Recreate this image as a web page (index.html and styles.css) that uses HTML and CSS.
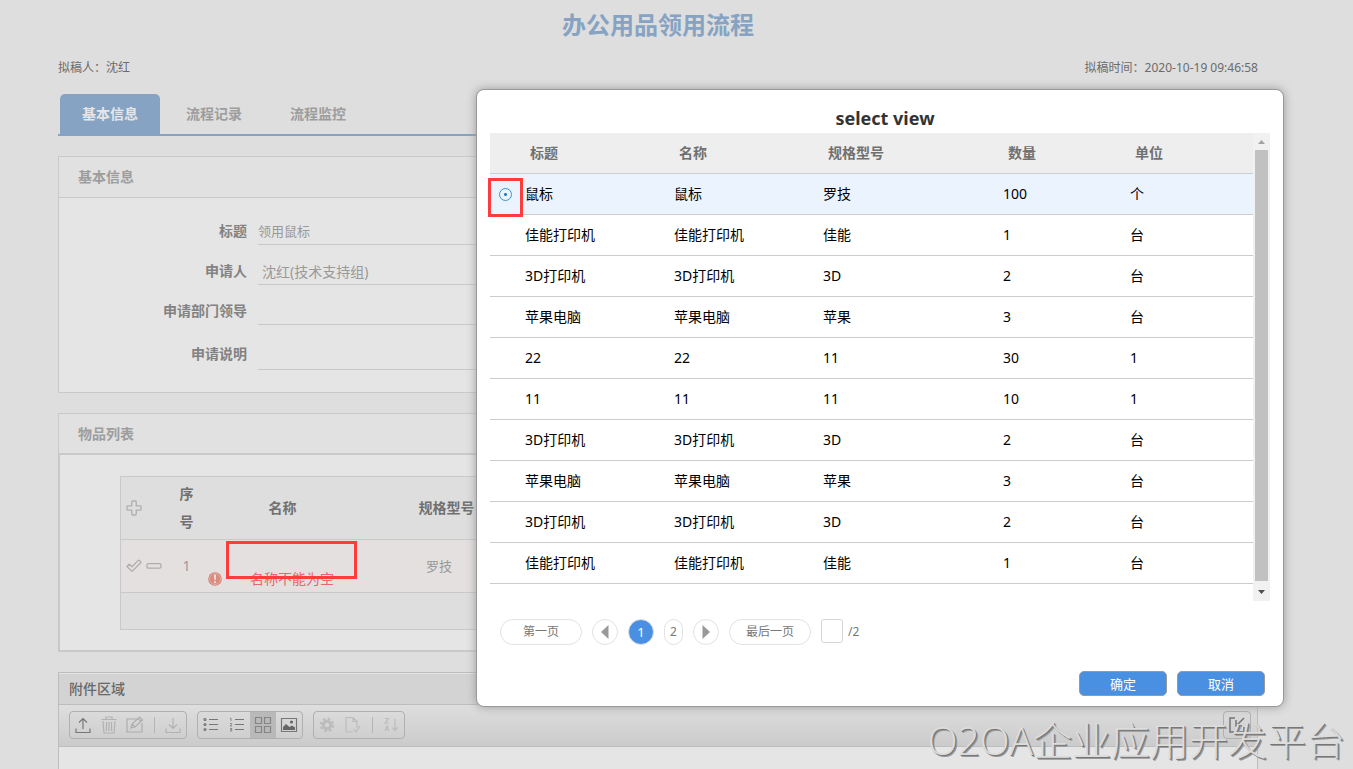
FILE: index.html
```html
<!DOCTYPE html>
<html lang="zh-CN">
<head>
<meta charset="utf-8">
<title>办公用品领用流程</title>
<link rel="stylesheet" href="styles.css">
</head>
<body>
<main class="page">
  <h1 class="page-title">办公用品领用流程</h1>
  <div class="meta"><span>拟稿人：沈红</span><span>拟稿时间：<time>2020-10-19 09:46:58</time></span></div>
  <nav class="tabs">
    <button class="tab tab-active" type="button">基本信息</button>
    <button class="tab" type="button">流程记录</button>
    <button class="tab" type="button">流程监控</button>
  </nav>

  <section class="panel">
    <h2 class="panel-head">基本信息</h2>
    <form class="form">
      <label for="f-title">标题</label><input id="f-title" type="text" value="领用鼠标">
      <label for="f-person">申请人</label><input id="f-person" class="person" type="text" value="沈红(技术支持组)">
      <label for="f-leader">申请部门领导</label><input id="f-leader" type="text">
      <label for="f-note">申请说明</label><textarea id="f-note"></textarea>
    </form>
  </section>

  <section class="panel panel-items">
    <h2 class="panel-head">物品列表</h2>
    <div class="items-body">
      <table class="items">
        <colgroup><col class="i-act"><col class="i-seq"><col class="i-name"><col class="i-spec"><col></colgroup>
        <thead>
          <tr>
            <th class="act"><button class="icon-btn" type="button" aria-label="添加"><svg width="16" height="16" viewBox="0 0 16 16" fill="none" stroke="#b0b0b0" stroke-width="1.3"><path d="M6.6 1h2.8q.8 0 .8.8v4h4q.8 0 .8.8v2.8q0 .8-.8.8h-4v4q0 .8-.8.8H6.600q-.8 0-.8-.8v-4h-4q-.8 0-.8-.8V6.600q0-.8.8-.8h4v-4q0-.8.8-.8z"/></svg></button></th>
            <th>序<br>号</th><th>名称</th><th>规格型号</th><th></th>
          </tr>
        </thead>
        <tbody>
          <tr class="invalid">
            <td class="act"><div class="act-row">
              <button class="icon-btn" type="button" aria-label="完成"><svg width="16" height="16" viewBox="0 0 16 16" fill="none" stroke="#adadad" stroke-width="1.3" stroke-linejoin="round"><path d="M1 8.500 3.200 6.200 6 8.800 12.300 2.400Q12.800 2 13.300 2.400L14.700 3.800Q15.100 4.300 14.700 4.800L6.600 12.900Q6 13.400 5.400 12.900z"/></svg></button>
              <button class="icon-btn" type="button" aria-label="删除"><svg width="16" height="16" viewBox="0 0 16 16" fill="none" stroke="#adadad" stroke-width="1.3"><rect x="1" y="5.600" width="14" height="4.600" rx="1.500"/></svg></button>
            </div></td>
            <td class="seq">1</td>
            <td class="name-cell">
              <div class="error"><svg width="14" height="14" viewBox="0 0 14 14"><circle cx="7" cy="7" r="6.800" fill="#d27f72"/><circle cx="7" cy="7" r="5.500" fill="#d98c7d" stroke="#e8bdb5" stroke-width=".7"/><path d="M6 2.800h2L7.600 8.300H6.400z" fill="#f4e8e6"/><circle cx="7" cy="10.200" r="1" fill="#f4e8e6"/></svg><span>名称不能为空</span></div>
              <i class="mark mark-name"></i>
            </td>
            <td class="spec">罗技</td><td></td>
          </tr>
          <tr class="foot"><td colspan="5"></td></tr>
        </tbody>
      </table>
    </div>
  </section>

  <section class="panel attachments">
    <h2 class="attach-head">附件区域</h2>
    <div class="toolbar">
      <div class="group">
        <button type="button" aria-label="上传"><svg viewBox="0 0 18 18" stroke="#777"><path d="M9 13V2.500M5 6.500l4-4 4 4M2 12.500v4h14v-4"/></svg></button>
        <button type="button" aria-label="删除附件"><svg viewBox="0 0 18 18" stroke="#b2b2b2"><path d="M1.500 3.500h15M6 3V1h6v2M3 5l1 12h10l1-12M6.500 6v9M9 6v9M11.500 6v9"/></svg></button>
        <button type="button" aria-label="编辑"><svg viewBox="0 0 18 18" stroke="#adadad"><path d="M12 3H1v13h15V7M5 12l1-4 7.500-7 3 3L9 11zM6 8l3 3M12 2.500l3 3"/></svg></button>
        <span class="sep"></span>
        <button type="button" aria-label="下载"><svg viewBox="0 0 18 18" stroke="#b2b2b2"><path d="M9 2v10.500M5 8.500l4 4 4-4M2 12.500v4h14v-4"/></svg></button>
      </div>
      <div class="group">
        <button type="button" aria-label="列表"><svg viewBox="0 0 18 18" stroke="#777"><path d="M7 3.500h9M7 8.500h9M7 13.500h9"/><circle cx="3" cy="3.500" r="1"/><circle cx="3" cy="8.500" r="1"/><circle cx="3" cy="13.500" r="1"/></svg></button>
        <button type="button" aria-label="编号列表"><svg viewBox="0 0 18 18" stroke="#777"><path d="M7 3.500h9M7 8.500h9M7 13.500h9"/><path stroke-width=".8" d="M2 2.500l1-.5v3M2 7.500h1.700v1L2 10h2M2 12.500h1.700v2.500H2M2.300 13.700h1.400"/></svg></button>
        <button class="on" type="button" aria-label="图标"><svg viewBox="0 0 18 18" stroke="#858585"><path d="M1.500 1.500h6v6h-6zM10.500 1.500h6v6h-6zM1.500 10.500h6v6h-6zM10.500 10.500h6v6h-6z"/></svg></button>
        <button type="button" aria-label="预览"><svg viewBox="0 0 18 18" stroke="#777"><path d="M1.500 2.500h15v13h-15z"/><path d="M3 14v-3l3-3 3.500 3L12 9.500l3 2V14z" fill="#666" stroke="none"/><circle cx="11.500" cy="6" r="1.600" fill="#666" stroke="none"/></svg></button>
      </div>
      <div class="group">
        <button type="button" aria-label="设置"><svg viewBox="0 0 18 18" stroke="#bcbcbc"><circle cx="9" cy="9" r="3.700" stroke-width="3"/><circle cx="9" cy="9" r="6.200" stroke-width="2.200" stroke-dasharray="2.600 2.270"/></svg></button>
        <button type="button" aria-label="审批"><svg viewBox="0 0 18 18" stroke="#bcbcbc"><path d="M9 16H2V1.500h7l4 4V12M9 1.500v4h4M10 13l2 3 4-6"/></svg></button>
        <span class="sep"></span>
        <button type="button" aria-label="排序"><svg viewBox="0 0 18 18" stroke="#bcbcbc"><path d="M3 2.500h3.500L3 7h4M3 15l2-5 2 5M3.500 13.500h3M13 3v11M10.500 11.500l2.500 3 2.500-3"/></svg></button>
      </div>
      <div class="group collapse">
        <button type="button" aria-label="收起"><svg viewBox="0 0 18 18" stroke="#747474"><path d="M7 2H2v14h14v-5M16 2 8 10M8 4v6h6" stroke-width="1.500"/></svg></button>
      </div>
    </div>
    <div class="attach-body"></div>
  </section>
</main>

<div class="dialog" role="dialog" aria-labelledby="dlg-title">
  <h2 class="dlg-title" id="dlg-title">select view</h2>
  <div class="view">
    <table class="list">
      <colgroup><col class="c-sel"><col class="c-text"><col class="c-text"><col class="c-spec"><col class="c-num"><col class="c-unit"></colgroup>
      <thead><tr><th></th><th>标题</th><th>名称</th><th>规格型号</th><th>数量</th><th>单位</th></tr></thead>
      <tbody>
        <tr class="selected"><td class="pick"><input type="radio" name="row" aria-label="选择 鼠标" checked><i class="mark mark-pick"></i></td><td>鼠标</td><td>鼠标</td><td>罗技</td><td>100</td><td>个</td></tr>
        <tr><td></td><td>佳能打印机</td><td>佳能打印机</td><td>佳能</td><td>1</td><td>台</td></tr>
        <tr><td></td><td>3D打印机</td><td>3D打印机</td><td>3D</td><td>2</td><td>台</td></tr>
        <tr><td></td><td>苹果电脑</td><td>苹果电脑</td><td>苹果</td><td>3</td><td>台</td></tr>
        <tr><td></td><td>22</td><td>22</td><td>11</td><td>30</td><td>1</td></tr>
        <tr><td></td><td>11</td><td>11</td><td>11</td><td>10</td><td>1</td></tr>
        <tr><td></td><td>3D打印机</td><td>3D打印机</td><td>3D</td><td>2</td><td>台</td></tr>
        <tr><td></td><td>苹果电脑</td><td>苹果电脑</td><td>苹果</td><td>3</td><td>台</td></tr>
        <tr><td></td><td>3D打印机</td><td>3D打印机</td><td>3D</td><td>2</td><td>台</td></tr>
        <tr><td></td><td>佳能打印机</td><td>佳能打印机</td><td>佳能</td><td>1</td><td>台</td></tr>
      </tbody>
    </table>
    <div class="scrollbar" aria-hidden="true">
      <svg width="17" height="17" viewBox="0 0 17 17"><path d="M5 11h7L8.500 7z" fill="#a3a3a3"/></svg>
      <div class="thumb"></div>
      <svg width="17" height="17" viewBox="0 0 17 17"><path d="M5 6h7l-3.500 4z" fill="#505050"/></svg>
    </div>
  </div>
  <div class="pager">
    <button class="wide" type="button">第一页</button>
    <button class="round" type="button" aria-label="上一页"><svg width="8" height="14" viewBox="0 0 8 14"><path d="M7.500 0v14L0 7z" fill="#999"/></svg></button>
    <button class="round current" type="button">1</button>
    <button class="num" type="button">2</button>
    <button class="round" type="button" aria-label="下一页"><svg width="8" height="14" viewBox="0 0 8 14"><path d="M.5 0v14L8 7z" fill="#999"/></svg></button>
    <button class="wide" type="button">最后一页</button>
    <label class="jump"><input type="text" aria-label="页码"><span>/2</span></label>
  </div>
  <div class="actions"><button type="button">确定</button><button type="button">取消</button></div>
</div>
<div class="watermark">O2OA企业应用开发平台</div>
</body>
</html>
```

FILE: styles.css
```css
* { box-sizing: border-box; }
html, body { height: 100%; }
body {
  margin: 0;
  padding: 0 37px 0 0;
  position: relative;
  overflow: hidden;
  background: #dedede;
  color: #6b6b6b;
  font: 14px/20px "Noto Sans", "Noto Sans CJK SC", sans-serif;
}
button, input, textarea { font: inherit; color: inherit; margin: 0; padding: 0; border: 0; background: none; }
h1, h2 { margin: 0; }
svg { display: block; }

.page { max-width: 1200px; min-height: 100%; margin: 0 auto; display: flex; flex-direction: column; }
.page-title { padding-top: 10px; font-size: 24px; line-height: 30px; text-align: center; color: #86a3c4; }
.meta { display: flex; justify-content: space-between; margin-top: 18px; font-size: 12px; }
.tabs { display: flex; gap: 4px; margin-top: 16px; padding-left: 2px; border-bottom: 2px solid #87a3c3; }
.tab { width: 100px; height: 40px; font-weight: 700; color: #9d9d9d; }
.tab-active { border-radius: 5px 5px 0 0; background: #87a3c3; color: #e6e6e6; }

.panel { margin-top: 20px; border: 1px solid #c9c9c9; background: #e5e5e5; }
.panel-head { height: 41px; padding-left: 19px; border-bottom: 1px solid #c9c9c9; background: #e1e1e1; font-size: 14px; font-weight: 700; line-height: 40px; color: #9d9d9d; }
.form { display: grid; grid-template-columns: 188px 1fr; column-gap: 11px; row-gap: 12px; align-items: center; padding: 19px 60px 22px 0; }
.form label { text-align: right; font-weight: 700; color: #828282; }
.form input, .form textarea { width: 100%; height: 28px; border-bottom: 1px solid #c9c9c9; border-radius: 0; font-size: 13px; color: #999; resize: none; display: block; }
.form textarea { height: 33px; }
.form .person { padding-left: 4px; font-size: 14px; }

.panel-items .panel-head { border-bottom-width: 2px; }
.items-body { padding: 21px 60px 20px; border: 1px solid #c9c9c9; border-width: 0 1px 1px; }
.items { width: 100%; border: 1px solid #c9c9c9; border-collapse: collapse; table-layout: fixed; background: #dedede; }
.items th, .items td { padding: 0; border: 1px solid #c9c9c9; border-width: 1px 0; text-align: center; }
.items th { height: 63px; font-weight: 700; line-height: 28px; color: #707070; }
.i-act { width: 45px; }
.i-seq { width: 42px; }
.i-name { width: 150px; }
.i-spec { width: 178px; }
.items .act { padding-left: 5px; }
.act-row { display: flex; gap: 4px; }
.icon-btn { display: block; width: 16px; height: 16px; }
.items .invalid { height: 53px; background: #e4e0df; color: #999; }
.items .foot { height: 37px; }
.items .name-cell { position: relative; vertical-align: bottom; padding-bottom: 3px; }
.items .spec { padding-right: 15px; font-size: 13px; }
.error { display: flex; align-items: center; }
.error span { flex: 1; padding-left: 5px; color: #e9656f; line-height: 20px; }
.mark { position: absolute; border: 3px solid #fd3c3c; }
.mark-name { left: 18px; top: 1px; width: 131px; height: 38px; }

.attachments { flex: 1; display: flex; flex-direction: column; border-color: #bdbdbd; border-bottom: 0; }
.attach-head { height: 32px; padding-left: 10px; border-bottom: 1px solid #bdbdbd; background: #d3d3d3; box-shadow: inset 0 1px #e4e4e4; font-size: 14px; font-weight: 500; line-height: 32px; color: #686868; }
.toolbar { display: flex; gap: 10px; padding: 6px 6px 7px 10px; border-bottom: 1px solid #bdbdbd; background: linear-gradient(#dedede, #cbcbcb); }
.group { display: flex; align-items: center; border: 1px solid #b0b0b0; border-radius: 4px; overflow: hidden; }
.group button { width: 26px; height: 26px; display: grid; place-items: center; }
.group svg { width: 18px; height: 18px; fill: none; stroke-width: 1.2; }
.group .on { background: #b9b9b9; }
.sep { width: 12px; height: 16px; background: linear-gradient(#b4b4b4, #b4b4b4) center / 1px 100% no-repeat; }
.collapse { margin-left: auto; }
.attach-body { flex: 1; }

.dialog {
  position: absolute;
  left: 476px;
  top: 89px;
  width: 808px;
  padding: 18px 13px 10px;
  border: 1px solid #999;
  border-radius: 8px;
  background: #fff;
  box-shadow: 0 0 10px #999;
}
.dlg-title { padding: 0 0 5px 10px; font-size: 18px; line-height: 20px; text-align: center; color: #333; }
.view { display: flex; height: 468px; }
.list { flex: 1; align-self: flex-start; border-collapse: separate; border-spacing: 0; table-layout: fixed; color: #000; }
.list th, .list td { height: 41px; border-bottom: 1px solid #ccc; padding: 0 0 0 5px; text-align: left; }
.list th { padding-left: 10px; background: #eee; font-weight: 700; color: #707070; }
.c-sel { width: 30px; }
.c-text { width: 149px; }
.c-spec { width: 180px; }
.c-num { width: 127px; }
.c-unit { width: 128px; }
.selected { background: #ebf3ff; }
.list .pick { position: relative; padding: 0; }
.pick input { appearance: none; display: block; width: 13px; height: 13px; margin: 0 auto; border: 1px solid #3d93c9; border-radius: 50%; background: radial-gradient(circle, #1c7fc0 1px, transparent 2px); }
.mark-pick { left: -2px; top: 4px; width: 35px; height: 39px; z-index: 1; }
.scrollbar { width: 17px; display: flex; flex-direction: column; background: #f1f1f1; }
.thumb { flex: 1; margin: 0 2px 3px; background: #c1c1c1; }
.pager { display: flex; gap: 10px; margin-top: 18px; padding-left: 10px; font-size: 12px; color: #777; }
.pager button { height: 26px; border: 1px solid #e2e2e2; border-radius: 13px; display: grid; place-items: center; }
.pager .wide { width: 82px; }
.pager .round { width: 26px; }
.pager .num { width: 19px; }
.pager .current { background: #4a90e2; color: #fff; font-size: 13px; }
.jump { display: flex; gap: 5px; line-height: 25px; }
.jump input { width: 22px; height: 24px; border: 1px solid #d6d6d6; border-radius: 3px; }
.actions { display: flex; justify-content: flex-end; gap: 10px; margin-top: 26px; padding-right: 5px; }
.actions button { width: 88px; height: 25px; border: 1px solid #999; border-radius: 5px; background: #4a90e2; color: #fff; font-size: 13px; line-height: 20px; }

.watermark { position: absolute; right: 8px; bottom: 4px; font: 300 39px/50px "Open Sans", "Noto Sans CJK SC", sans-serif; color: #dcdcdc; text-shadow: 1px 1px #777, 2px 2px #999; white-space: nowrap; }
```
